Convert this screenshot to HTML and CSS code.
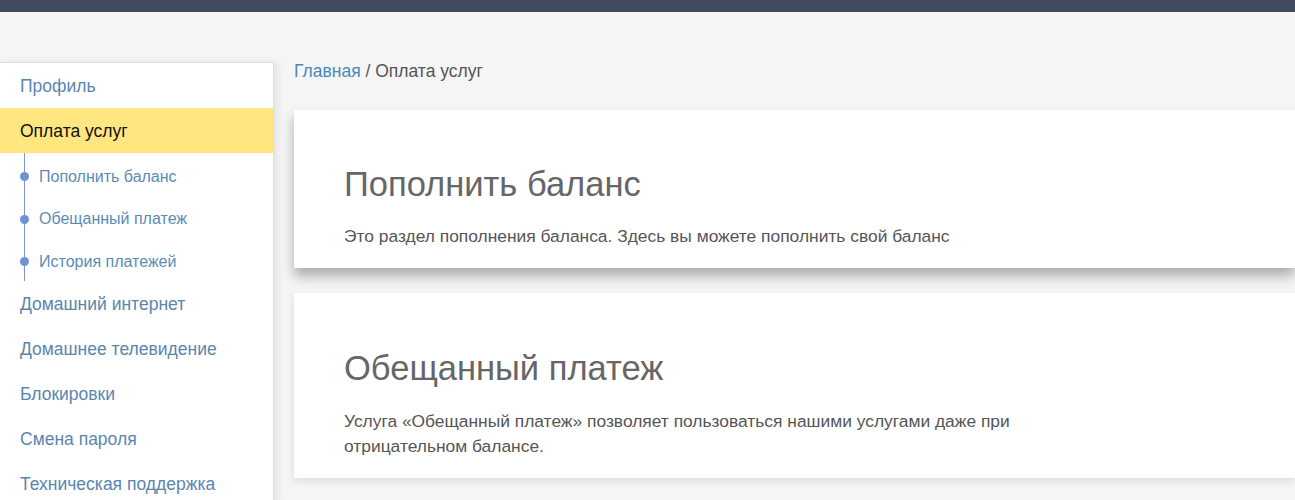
FILE: index.html
```html
<!DOCTYPE html>
<html lang="ru">
<head>
    <meta charset="UTF-8">
    <title>Оплата услуг</title>
    <link rel="stylesheet" href="styles.css">
</head>
<body>
    <div class="topbar"></div>

    <div class="layout">
        <nav class="sidebar">
            <a class="nav-item" href="#">Профиль</a>
            <a class="nav-item active" href="#">Оплата услуг</a>
            <div class="sub-nav">
                <a class="sub-item" href="#">Пополнить баланс</a>
                <a class="sub-item" href="#">Обещанный платеж</a>
                <a class="sub-item" href="#">История платежей</a>
            </div>
            <a class="nav-item" href="#">Домашний интернет</a>
            <a class="nav-item" href="#">Домашнее телевидение</a>
            <a class="nav-item" href="#">Блокировки</a>
            <a class="nav-item" href="#">Смена пароля</a>
            <a class="nav-item" href="#">Техническая поддержка</a>
        </nav>

        <main class="content">
            <div class="breadcrumb">
                <a href="#">Главная</a> / Оплата услуг
            </div>

            <section class="card card-first">
                <h2>Пополнить баланс</h2>
                <p>Это раздел пополнения баланса. Здесь вы можете пополнить свой баланс</p>
            </section>

            <section class="card card-second">
                <h2>Обещанный платеж</h2>
                <p>Услуга «Обещанный платеж» позволяет пользоваться нашими услугами даже при<br>отрицательном балансе.</p>
            </section>
        </main>
    </div>
</body>
</html>
```

FILE: styles.css
```css
* {
    margin: 0;
    padding: 0;
    box-sizing: border-box;
}

body {
    font-family: 'Liberation Sans', Arial, sans-serif;
    background: #f5f5f5;
    color: #555;
    overflow: hidden;
}

a {
    text-decoration: none;
}

.topbar {
    height: 12px;
    background: #424a5d;
}

.layout {
    display: flex;
    align-items: flex-start;
    padding-top: 50px;
}

.sidebar {
    width: 274px;
    flex-shrink: 0;
    background: #fff;
    border: 1px solid #dedede;
    border-left: none;
    box-shadow: 3px 0 8px rgba(0, 0, 0, 0.08);
    display: flex;
    flex-direction: column;
}

.nav-item {
    display: flex;
    align-items: center;
    height: 45px;
    padding: 2px 0 0 20px;
    font-size: 17.5px;
    color: #5a86ae;
}

.nav-item.active {
    background: #ffe680;
    color: #111;
}

.sub-nav {
    position: relative;
    display: flex;
    flex-direction: column;
}

.sub-nav::before {
    content: '';
    position: absolute;
    left: 24px;
    top: 0;
    bottom: 0;
    width: 1px;
    background: #7f98c9;
}

.sub-item {
    position: relative;
    display: flex;
    align-items: center;
    height: 42.5px;
    padding: 5px 0 0 39px;
    font-size: 16px;
    color: #5b8bb5;
}

.sub-item::before {
    content: '';
    position: absolute;
    left: 20px;
    top: 50%;
    width: 9px;
    height: 9px;
    margin-top: -2px;
    border-radius: 50%;
    background: #7191d6;
}

.content {
    flex: 1;
    padding-left: 20px;
    margin-top: -3px;
}

.breadcrumb {
    font-size: 17.5px;
    line-height: 24px;
    color: #555;
    margin-bottom: 27px;
}

.breadcrumb a {
    color: #4a8ab8;
}

.card {
    background: #fff;
    padding-left: 50px;
    margin-bottom: 25px;
}

.card h2 {
    font-weight: 400;
    font-size: 34.5px;
    color: #666;
    line-height: 40px;
}

.card p {
    font-size: 17.4px;
    line-height: 25px;
    color: #555;
}

.card-first {
    height: 158px;
    padding-top: 54px;
    box-shadow: 0 8px 12px rgba(0, 0, 0, 0.3);
}

.card-first h2 {
    margin-bottom: 20px;
}

.card-second {
    height: 185px;
    padding-top: 55px;
    box-shadow: 0 3px 8px rgba(0, 0, 0, 0.1);
}

.card-second h2 {
    margin-bottom: 21px;
}
```
